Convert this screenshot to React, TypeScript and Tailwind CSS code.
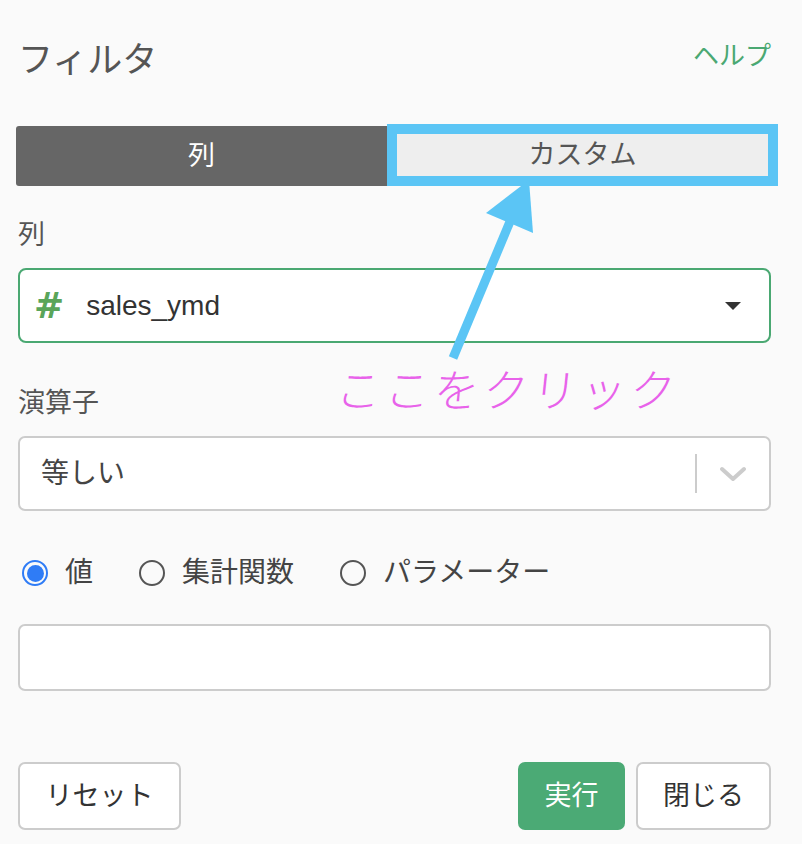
import React from "react";

const jp = { fontFamily: '"Liberation Sans", "Noto Sans CJK JP", sans-serif' };

function Radio({ checked, label }: { checked?: boolean; label: string }) {
  return (
    <div className="flex items-center">
      {checked ? (
        <div className="w-[26px] h-[26px] rounded-full border-[2px] border-[#2f7cf6] flex items-center justify-center">
          <div className="w-[17px] h-[17px] rounded-full bg-[#2f7cf6]" />
        </div>
      ) : (
        <div className="w-[26px] h-[26px] rounded-full border-[2px] border-[#555]" />
      )}
      <span className="ml-[17px] text-[28px] leading-[32px] text-[#444]">{label}</span>
    </div>
  );
}

export default function App() {
  return (
    <div className="relative w-[802px] h-[844px] bg-[#fafafa] overflow-hidden" style={jp}>
      <div className="flex flex-col pl-[18px] w-[771px]">
        {/* title */}
        <div className="mt-[40px] h-[40px] flex items-center justify-between">
          <span className="text-[35px] leading-[40px] text-[#555]">フィルタ</span>
          <span className="text-[26px] leading-[32px] text-[#4aa872] -mt-[8px]">ヘルプ</span>
        </div>

        {/* tabs */}
        <div className="mt-[44px] -ml-[2px] w-[762px] h-[62px] flex items-end">
          <div className="w-[371px] h-[60px] bg-[#666666] rounded-l-[3px] flex items-center justify-center text-white text-[27px]">
            列
          </div>
          <div className="flex-1 h-[62px] border-[10px] border-[#5bc5f5] bg-[#eeeeee] flex items-center justify-center text-[#555] text-[27px]">
            カスタム
          </div>
        </div>

        {/* column label */}
        <div className="mt-[33px] text-[27px] leading-[32px] text-[#555]">列</div>
        <div className="mt-[17px] h-[75px] rounded-[8px] border-[2px] border-[#4aa872] bg-white flex items-center">
          <span className="ml-[14px] text-[#5aa55a] text-[36px] font-bold leading-none" style={{ fontFamily: '"DejaVu Sans", sans-serif' }}>#</span>
          <span className="ml-[22px] text-[28px] text-[#333]">sales_ymd</span>
          <div className="flex-1" />
          <svg width="16" height="8" viewBox="0 0 16 8" className="mr-[28px]">
            <path d="M0 0 L16 0 L8 8 Z" fill="#333" />
          </svg>
        </div>

        {/* operator */}
        <div className="mt-[44px] text-[27px] leading-[32px] text-[#555]">演算子</div>
        <div className="mt-[17px] h-[75px] rounded-[7px] border-[2px] border-[#cccccc] bg-white flex items-center">
          <span className="ml-[21px] text-[28px] text-[#444]">等しい</span>
          <div className="flex-1" />
          <div className="w-[2px] h-[39px] bg-[#cccccc]" />
          <svg width="26" height="16" viewBox="0 0 26 16" className="ml-[23px] mr-[23px]">
            <path d="M2 3 L13 13 L24 3" fill="none" stroke="#cccccc" strokeWidth="4" strokeLinecap="round" strokeLinejoin="round" />
          </svg>
        </div>

        {/* radios */}
        <div className="mt-[46px] h-[32px] flex items-center pl-[4px] gap-[46px]">
          <Radio checked label="値" />
          <Radio label="集計関数" />
          <Radio label="パラメーター" />
        </div>

        {/* input */}
        <div className="mt-[35px] h-[67px] rounded-[7px] border-[2px] border-[#cccccc] bg-white" />

        {/* buttons */}
        <div className="mt-[71px] flex items-center">
          <button className="w-[163px] h-[68px] rounded-[7px] border-[2px] border-[#cccccc] bg-white text-[27px] text-[#333]">
            リセット
          </button>
          <div className="flex-1" />
          <button className="w-[107px] h-[68px] rounded-[7px] bg-[#4baa75] text-[27px] text-white">
            実行
          </button>
          <button className="ml-[11px] w-[135px] h-[68px] rounded-[7px] border-[2px] border-[#cccccc] bg-white text-[27px] text-[#333]">
            閉じる
          </button>
        </div>
      </div>

      {/* annotation arrow */}
      <svg className="absolute left-0 top-0 pointer-events-none" width="802" height="844" viewBox="0 0 802 844">
        <line x1="453" y1="358" x2="514" y2="212" stroke="#5bc5f5" strokeWidth="9" />
        <polygon points="529,180 486,213 533,233" fill="#5bc5f5" />
      </svg>

      {/* annotation text */}
      <div
        className="absolute left-[336px] top-[364px] text-[45px] leading-[56px] tracking-[4px] text-[#e862ea] font-light -skew-x-6"
        style={jp}
      >
        ここをクリック
      </div>
    </div>
  );
}
